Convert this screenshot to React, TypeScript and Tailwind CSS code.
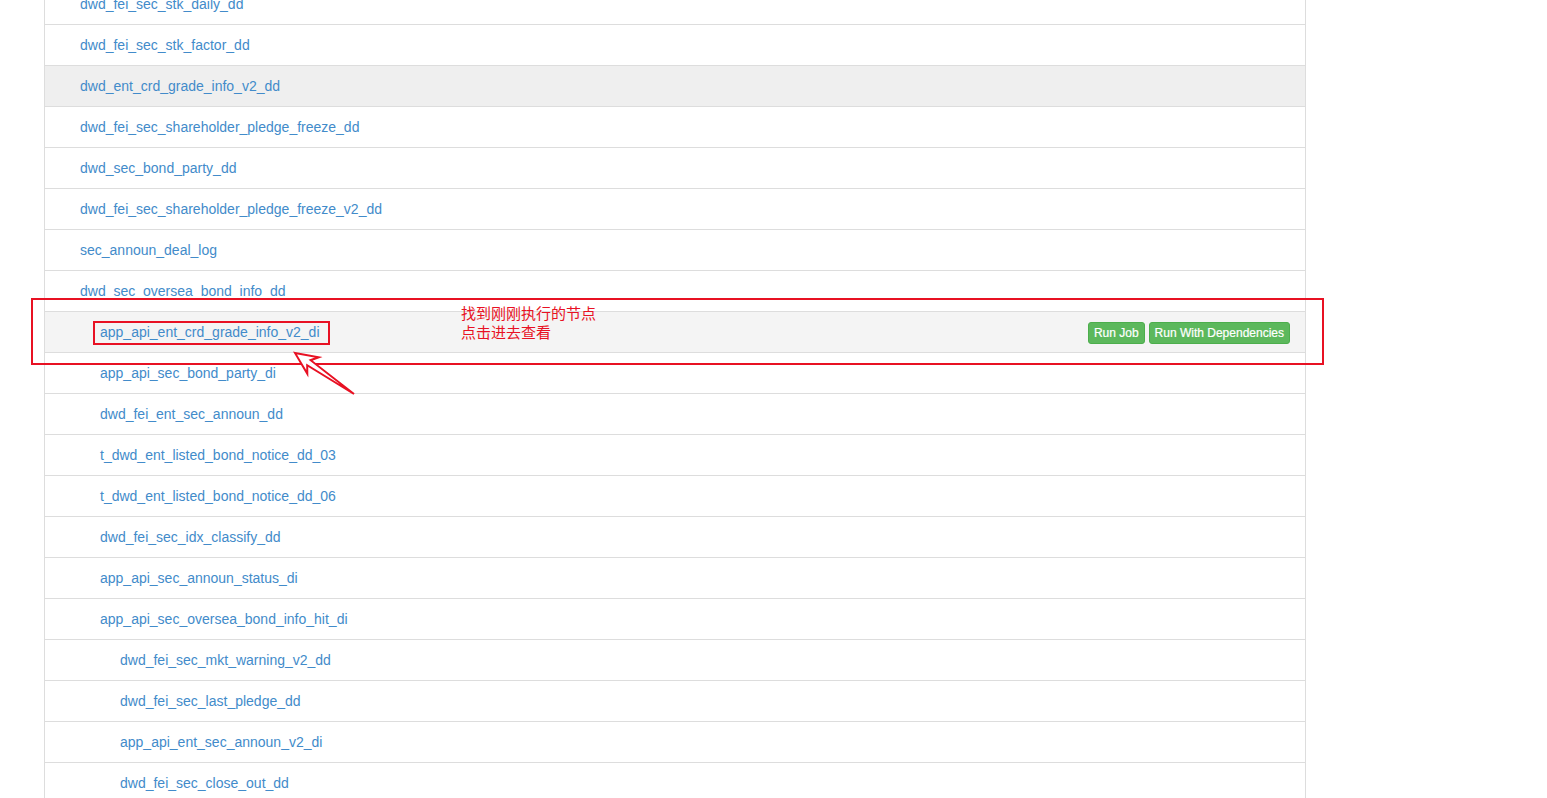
import React from 'react';

type Job = { name: string; level: number; bg?: string; actions?: boolean };

const jobs: Job[] = [
  { name: 'dwd_fei_sec_stk_daily_dd', level: 0 },
  { name: 'dwd_fei_sec_stk_factor_dd', level: 0 },
  { name: 'dwd_ent_crd_grade_info_v2_dd', level: 0, bg: 'bg-[#efefef]' },
  { name: 'dwd_fei_sec_shareholder_pledge_freeze_dd', level: 0 },
  { name: 'dwd_sec_bond_party_dd', level: 0 },
  { name: 'dwd_fei_sec_shareholder_pledge_freeze_v2_dd', level: 0 },
  { name: 'sec_announ_deal_log', level: 0 },
  { name: 'dwd_sec_oversea_bond_info_dd', level: 0 },
  { name: 'app_api_ent_crd_grade_info_v2_di', level: 1, bg: 'bg-[#f4f4f4]', actions: true },
  { name: 'app_api_sec_bond_party_di', level: 1 },
  { name: 'dwd_fei_ent_sec_announ_dd', level: 1 },
  { name: 't_dwd_ent_listed_bond_notice_dd_03', level: 1 },
  { name: 't_dwd_ent_listed_bond_notice_dd_06', level: 1 },
  { name: 'dwd_fei_sec_idx_classify_dd', level: 1 },
  { name: 'app_api_sec_announ_status_di', level: 1 },
  { name: 'app_api_sec_oversea_bond_info_hit_di', level: 1 },
  { name: 'dwd_fei_sec_mkt_warning_v2_dd', level: 2 },
  { name: 'dwd_fei_sec_last_pledge_dd', level: 2 },
  { name: 'app_api_ent_sec_announ_v2_di', level: 2 },
  { name: 'dwd_fei_sec_close_out_dd', level: 2 },
];

const indent = ['pl-[35px]', 'pl-[55px]', 'pl-[75px]'];

function JobRow({ job }: { job: Job }) {
  return (
    <div
      className={`flex h-[41px] items-center justify-between border-b border-[#ddd] pr-[15px] ${indent[job.level]} ${job.bg ?? 'bg-white'}`}
    >
      <a href="#" className="text-[14px] leading-5 text-[#428bca] hover:underline">
        {job.name}
      </a>
      {job.actions && (
        <div className="mt-[2px] flex gap-[4px]">
          <button className="h-[22px] rounded-[3px] border border-[#4cae4c] bg-[#5cb85c] px-[5px] text-[12px] leading-[18px] text-white [-webkit-text-stroke:0.2px_white]">
            Run Job
          </button>
          <button className="h-[22px] rounded-[3px] border border-[#4cae4c] bg-[#5cb85c] px-[5px] text-[12px] leading-[18px] text-white [-webkit-text-stroke:0.2px_white]">
            Run With Dependencies
          </button>
        </div>
      )}
    </div>
  );
}

export default function App() {
  return (
    <div
      className="relative h-[798px] overflow-hidden bg-white"
      style={{ fontFamily: '"Liberation Sans", Arial, sans-serif' }}
    >
      <div className="ml-[44px] mt-[-16px] w-[1262px] border-x border-[#ddd]">
        {jobs.map((job) => (
          <JobRow key={job.name} job={job} />
        ))}
      </div>

      {/* annotation overlay */}
      <div className="pointer-events-none absolute left-[31px] top-[298px] h-[67px] w-[1293px] border-2 border-[#e81123]" />
      <div className="pointer-events-none absolute left-[93px] top-[321px] h-[24px] w-[237px] border-2 border-[#e81123]" />
      <div
        className="pointer-events-none absolute left-[461px] top-[303px] text-[15px] leading-[19px] text-[#e81123]"
        style={{ fontFamily: '"Noto Sans CJK SC", sans-serif' }}
      >
        <div>找到刚刚执行的节点</div>
        <div>点击进去查看</div>
      </div>
      <svg className="pointer-events-none absolute left-0 top-0" width="1547" height="798">
        <polygon
          points="295,353 318.7,357.3 310.6,360.2 354,394 307.2,365.2 307.3,373.7"
          fill="white"
          stroke="#e81123"
          strokeWidth="2"
          strokeLinejoin="miter"
        />
      </svg>
    </div>
  );
}
